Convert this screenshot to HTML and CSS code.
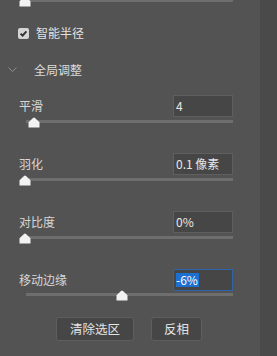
FILE: index.html
```html
<!DOCTYPE html>
<html lang="zh-CN">
<head>
<meta charset="utf-8">
<link rel="stylesheet" href="styles.css">
</head>
<body>
<div class="panel">
  <div class="main">
    <div class="track track-top"><span class="thumb" style="left:-7px"><svg width="12" height="11" viewBox="0 0 12 11"><path d="M6 0.5 Q6.5 0.5 7 1 L11.5 5.2 V10.5 H0.5 V5.2 L5 1 Q5.5 0.5 6 0.5 Z" fill="#f2f2f2"/></svg></span></div>

    <label class="check-row">
      <span class="checkbox"><svg width="11" height="11" viewBox="0 0 11 11"><path d="M2.6 5.6 L4.6 7.6 L8.4 3.4" fill="none" stroke="#2e2e2e" stroke-width="1.8"/></svg></span>
      <span class="check-label">智能半径</span>
    </label>

    <div class="section-row">
      <svg class="chevron" width="9" height="6" viewBox="0 0 9 6"><path d="M0.5 0.5 L4.5 4.5 L8.5 0.5" fill="none" stroke="#8f8f8f" stroke-width="1"/></svg>
      <span class="section-label">全局调整</span>
    </div>

    <div class="group first">
      <div class="field-row">
        <span class="label">平滑</span>
        <span class="input">4</span>
      </div>
      <div class="track"><span class="thumb" style="left:2px"><svg width="12" height="11" viewBox="0 0 12 11"><path d="M6 0.5 Q6.5 0.5 7 1 L11.5 5.2 V10.5 H0.5 V5.2 L5 1 Q5.5 0.5 6 0.5 Z" fill="#f2f2f2"/></svg></span></div>
    </div>

    <div class="group">
      <div class="field-row">
        <span class="label">羽化</span>
        <span class="input">0.1 像素</span>
      </div>
      <div class="track"><span class="thumb" style="left:-7px"><svg width="12" height="11" viewBox="0 0 12 11"><path d="M6 0.5 Q6.5 0.5 7 1 L11.5 5.2 V10.5 H0.5 V5.2 L5 1 Q5.5 0.5 6 0.5 Z" fill="#f2f2f2"/></svg></span></div>
    </div>

    <div class="group">
      <div class="field-row">
        <span class="label">对比度</span>
        <span class="input">0%</span>
      </div>
      <div class="track"><span class="thumb" style="left:-7px"><svg width="12" height="11" viewBox="0 0 12 11"><path d="M6 0.5 Q6.5 0.5 7 1 L11.5 5.2 V10.5 H0.5 V5.2 L5 1 Q5.5 0.5 6 0.5 Z" fill="#f2f2f2"/></svg></span></div>
    </div>

    <div class="group">
      <div class="field-row">
        <span class="label">移动边缘</span>
        <span class="input focused"><span class="selected">-6%</span></span>
      </div>
      <div class="track track-last"><span class="thumb" style="left:90px"><svg width="12" height="11" viewBox="0 0 12 11"><path d="M6 0.5 Q6.5 0.5 7 1 L11.5 5.2 V10.5 H0.5 V5.2 L5 1 Q5.5 0.5 6 0.5 Z" fill="#f2f2f2"/></svg></span></div>
    </div>

    <div class="buttons">
      <button class="btn btn-wide">清除选区</button>
      <button class="btn btn-narrow">反相</button>
    </div>
  </div>
  <div class="strip"></div>
</div>
</body>
</html>
```

FILE: styles.css
```css
* { box-sizing: border-box; }

html, body {
  margin: 0;
  padding: 0;
  background: #535353;
  overflow: hidden;
}

body {
  font-family: "Noto Sans CJK SC", "Noto Sans", "Liberation Sans", sans-serif;
  font-size: 12px;
  color: #dcdcdc;
}

.panel {
  display: flex;
  width: 277px;
  height: 356px;
}

.main {
  width: 260px;
  display: flex;
  flex-direction: column;
}

.strip {
  flex: 1;
  background: #4a4a4a;
}

.track {
  position: relative;
  margin-left: 26px;
  width: 207px;
  height: 3px;
  margin-top: 3px;
  background: #6e6e6e;
}

.track-top {
  height: 2px;
  margin-top: 0;
}

.track-top .thumb {
  top: -4px;
}

.track-last {
  margin-top: 2px;
}

.thumb {
  position: absolute;
  top: -3px;
  width: 12px;
  height: 11px;
  display: block;
  line-height: 0;
}

.check-row {
  display: flex;
  align-items: center;
  height: 14px;
  margin-top: 24px;
  padding-left: 18px;
  line-height: 14px;
}

.checkbox {
  width: 11px;
  height: 11px;
  border-radius: 2px;
  background: #d4d4d4;
  display: block;
  line-height: 0;
}

.check-label {
  margin-left: 7px;
  color: #e2e2e2;
}

.section-row {
  display: flex;
  align-items: center;
  height: 14px;
  margin-top: 23px;
  padding-left: 8px;
  line-height: 14px;
}

.chevron {
  display: block;
}

.section-label {
  margin-left: 17px;
  color: #dcdcdc;
}

.group {
  display: flex;
  flex-direction: column;
  margin-top: 30px;
}

.group.first {
  margin-top: 18px;
}

.field-row {
  display: flex;
  align-items: center;
  justify-content: space-between;
  padding-left: 19px;
  padding-right: 27px;
  height: 22px;
  line-height: 14px;
}

.label {
  color: #d6d6d6;
}

.input {
  width: 60px;
  height: 22px;
  border: 1px solid #5f5f5f;
  background: #464646;
  padding-left: 2px;
  display: flex;
  align-items: center;
  color: #e6e6e6;
  font-size: 12px;
  white-space: nowrap;
}

.input.focused {
  border-color: #2f65a8;
}

.selected {
  background: #1d6fd0;
  color: #ffffff;
  line-height: 14px;
  padding-right: 1px;
}

.buttons {
  display: flex;
  gap: 17px;
  padding-left: 56px;
  margin-top: 21px;
}

.btn {
  height: 24px;
  border: 1px solid #5e5e5e;
  border-radius: 3px;
  background: #464646;
  color: #e4e4e4;
  font-family: "Noto Sans CJK SC", "Noto Sans", sans-serif;
  font-size: 12.5px;
  padding: 0;
  line-height: 20px;
}

.btn-wide { width: 78px; }
.btn-narrow { width: 51px; }
```
